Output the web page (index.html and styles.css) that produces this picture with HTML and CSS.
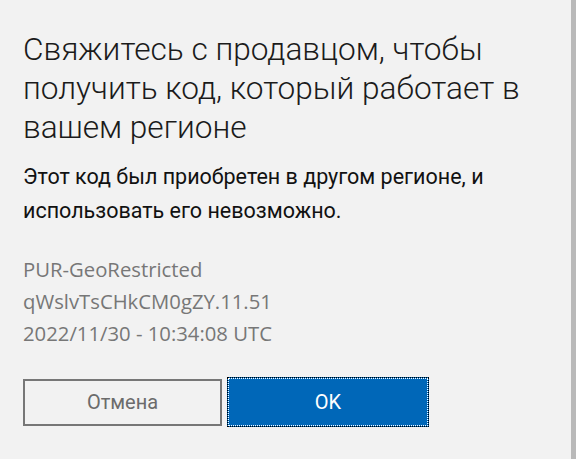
FILE: index.html
```html
<!DOCTYPE html>
<html lang="ru">
<head>
<meta charset="utf-8">
<link rel="stylesheet" href="styles.css">
</head>
<body>
<div class="page">
  <div class="dialog">
    <h1 class="title">Свяжитесь с продавцом, чтобы получить код, который работает в вашем регионе</h1>
    <p class="message">Этот код был приобретен в другом регионе, и использовать его невозможно.</p>
    <div class="details">
      <div>PUR-GeoRestricted</div>
      <div>qWslvTsCHkCM0gZY.11.51</div>
      <div>2022/11/30 - 10:34:08 UTC</div>
    </div>
    <div class="buttons">
      <button class="btn btn-cancel">Отмена</button>
      <button class="btn btn-ok">OK</button>
    </div>
  </div>
  <div class="edge"></div>
</div>
</body>
</html>
```
FILE: styles.css
```css
html, body {
  margin: 0;
  padding: 0;
  height: 100%;
  background: #f2f2f2;
}
.page {
  display: flex;
  width: 576px;
  height: 459px;
  overflow: hidden;
}
.dialog {
  flex: 1;
  padding: 30px 0 0 23px;
  box-sizing: border-box;
}
.edge {
  width: 5px;
  background: #b9b9b9;
}
.title {
  margin: 0;
  width: 540px;
  font-family: Roboto, "Liberation Sans", sans-serif;
  font-weight: 300;
  font-size: 31.6px;
  line-height: 39px;
  color: #1b1b1b;
}
.message {
  margin: 13px 0 0 0;
  width: 540px;
  font-family: Roboto, "Liberation Sans", sans-serif;
  font-weight: 400;
  font-size: 21.5px;
  line-height: 34px;
  color: #111;
}
.details {
  margin-top: 25px;
  font-family: "Open Sans", "Liberation Sans", sans-serif;
  font-size: 20.3px;
  line-height: 32px;
  color: #777;
}
.buttons {
  display: flex;
  gap: 5px;
  align-items: center;
  margin-top: 28px;
}
.btn {
  box-sizing: border-box;
  font-family: Roboto, "Liberation Sans", sans-serif;
  font-size: 20px;
  cursor: default;
  padding: 0;
}
.btn-cancel {
  width: 199px;
  height: 47px;
  background: #f2f2f2;
  border: 2px solid #777;
  color: #6b6b6b;
}
.btn-ok {
  width: 202px;
  height: 50px;
  background: #0067b8;
  border: 1px dotted #000;
  outline: 1px dotted #fff;
  outline-offset: -2px;
  color: #fff;
}
```
